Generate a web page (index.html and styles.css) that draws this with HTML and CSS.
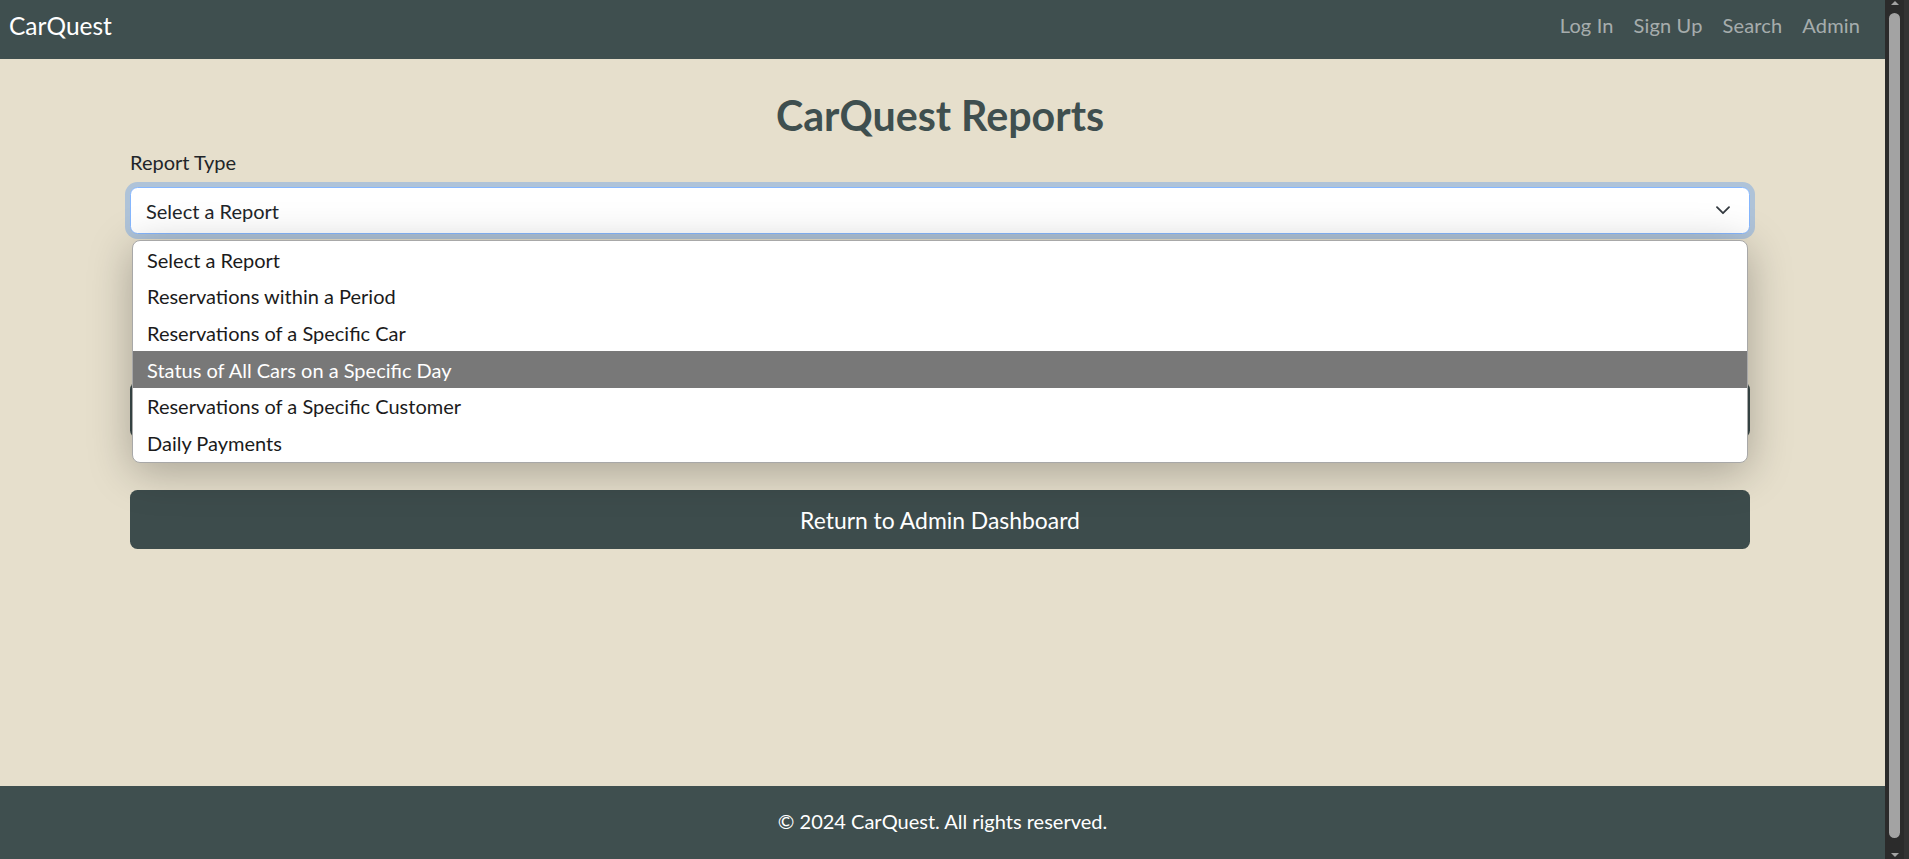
FILE: index.html
```html
<!DOCTYPE html>
<html lang="en">
<head>
<meta charset="utf-8">
<title>CarQuest Reports</title>
<link rel="stylesheet" href="styles.css">
</head>
<body>
<div class="page">
  <header class="navbar">
    <a class="brand">CarQuest</a>
    <nav class="nav">
      <a class="nav-link">Log In</a>
      <a class="nav-link">Sign Up</a>
      <a class="nav-link">Search</a>
      <a class="nav-link">Admin</a>
    </nav>
  </header>
  <main class="main">
    <div class="container">
      <h1 class="title">CarQuest Reports</h1>
      <div class="label">Report Type</div>
      <div class="select-wrap">
        <div class="select">
          <span>Select a Report</span>
          <svg class="chevron" width="14" height="9" viewBox="0 0 14 9"><path d="M1 1.2 7 7.2 13 1.2" fill="none" stroke="#343a40" stroke-width="1.8" stroke-linecap="round" stroke-linejoin="round"/></svg>
        </div>
        <ul class="popup">
          <li class="option">Select a Report</li>
          <li class="option">Reservations within a Period</li>
          <li class="option">Reservations of a Specific Car</li>
          <li class="option selected">Status of All Cars on a Specific Day</li>
          <li class="option">Reservations of a Specific Customer</li>
          <li class="option">Daily Payments</li>
        </ul>
      </div>
      <button class="btn btn-gen">Generate Report</button>
      <button class="btn btn-return">Return to Admin Dashboard</button>
    </div>
  </main>
  <footer class="footer">© 2024 CarQuest. All rights reserved.</footer>
</div>
<div class="scrollbar">
  <div class="arrow-up"></div>
  <div class="thumb"></div>
  <div class="arrow-down"></div>
</div>
</body>
</html>
```
FILE: styles.css
```css
html, body {
  margin: 0;
  padding: 0;
}
body {
  display: flex;
  height: 859px;
  overflow: hidden;
  font-family: "Lato", "Open Sans", sans-serif;
  background: #e6dfcc;
}
.page {
  flex: 1;
  display: flex;
  flex-direction: column;
  min-width: 0;
}
.navbar {
  height: 58.5px;
  box-sizing: border-box;
  background: #3f4f4f;
  display: flex;
  align-items: center;
  justify-content: space-between;
  padding: 0 15px 8px 9px;
}
.brand {
  color: #ffffff;
  font-size: 24.5px;
}
.nav {
  display: flex;
}
.nav-link {
  color: rgba(255, 255, 255, 0.55);
  font-size: 20px;
  letter-spacing: 0.15px;
  padding: 0 10px;
}
.main {
  flex: 1;
  padding-top: 32.5px;
}
.container {
  width: 1620px;
  margin-left: 130px;
  display: flex;
  flex-direction: column;
}
.title {
  margin: 0 0 7.5px;
  font-size: 41.2px;
  line-height: 48px;
  font-weight: 700;
  text-align: center;
  color: #3f4f4f;
}
.label {
  font-size: 20px;
  line-height: 30px;
  color: #212529;
  margin-bottom: 10px;
}
.select-wrap {
  position: relative;
}
.select {
  height: 47.5px;
  box-sizing: border-box;
  background: #ffffff;
  border: 1px solid #86b7fe;
  border-radius: 7.5px;
  box-shadow: 0 0 0 5px rgba(13, 110, 253, 0.25);
  display: flex;
  align-items: center;
  justify-content: space-between;
  padding: 1px 19px 0 15px;
  font-size: 20px;
  color: #212529;
}
.chevron {
  display: block;
}
.popup {
  position: absolute;
  top: 53px;
  left: 2px;
  right: 2px;
  margin: 0;
  padding: 1px 0 1px;
  list-style: none;
  background: #ffffff;
  border: 1px solid #a8a8a8;
  border-radius: 8px;
  box-shadow: 0 8px 44px rgba(0, 0, 0, 0.28);
  z-index: 10;
  overflow: hidden;
}
.option {
  height: 36.6px;
  display: flex;
  align-items: center;
  padding-left: 14px;
  font-size: 20px;
  color: #1b1b1b;
}
.option.selected {
  background: #787878;
  color: #ffffff;
}
.btn {
  border: 0;
  border-radius: 7.5px;
  background: #3d4c4c;
  color: #ffffff;
  font-family: inherit;
  width: 100%;
}
.btn-gen {
  margin-top: 148px;
  height: 56px;
  font-size: 20px;
}
.btn-return {
  margin-top: 52px;
  height: 59px;
  font-size: 22.9px;
}
.footer {
  height: 73px;
  box-sizing: border-box;
  padding-bottom: 3px;
  background: #3f4f4f;
  color: #ffffff;
  font-size: 20px;
  display: flex;
  align-items: center;
  justify-content: center;
}
.scrollbar {
  width: 19px;
  background: #2b2b2b;
  border-right: 5px solid #333333;
  display: flex;
  flex-direction: column;
  align-items: flex-start;
}
.arrow-up {
  width: 0;
  height: 0;
  margin: 1px 0 0 6px;
  border-left: 4px solid transparent;
  border-right: 4px solid transparent;
  border-bottom: 4px solid #a3a3a3;
}
.thumb {
  flex: 1;
  width: 11px;
  margin: 8px 0 15px 4px;
  background: #a3a3a3;
  border-radius: 6px;
}
.arrow-down {
  width: 0;
  height: 0;
  margin: 0 0 2px 6px;
  border-left: 4px solid transparent;
  border-right: 4px solid transparent;
  border-top: 4px solid #a3a3a3;
}
```
